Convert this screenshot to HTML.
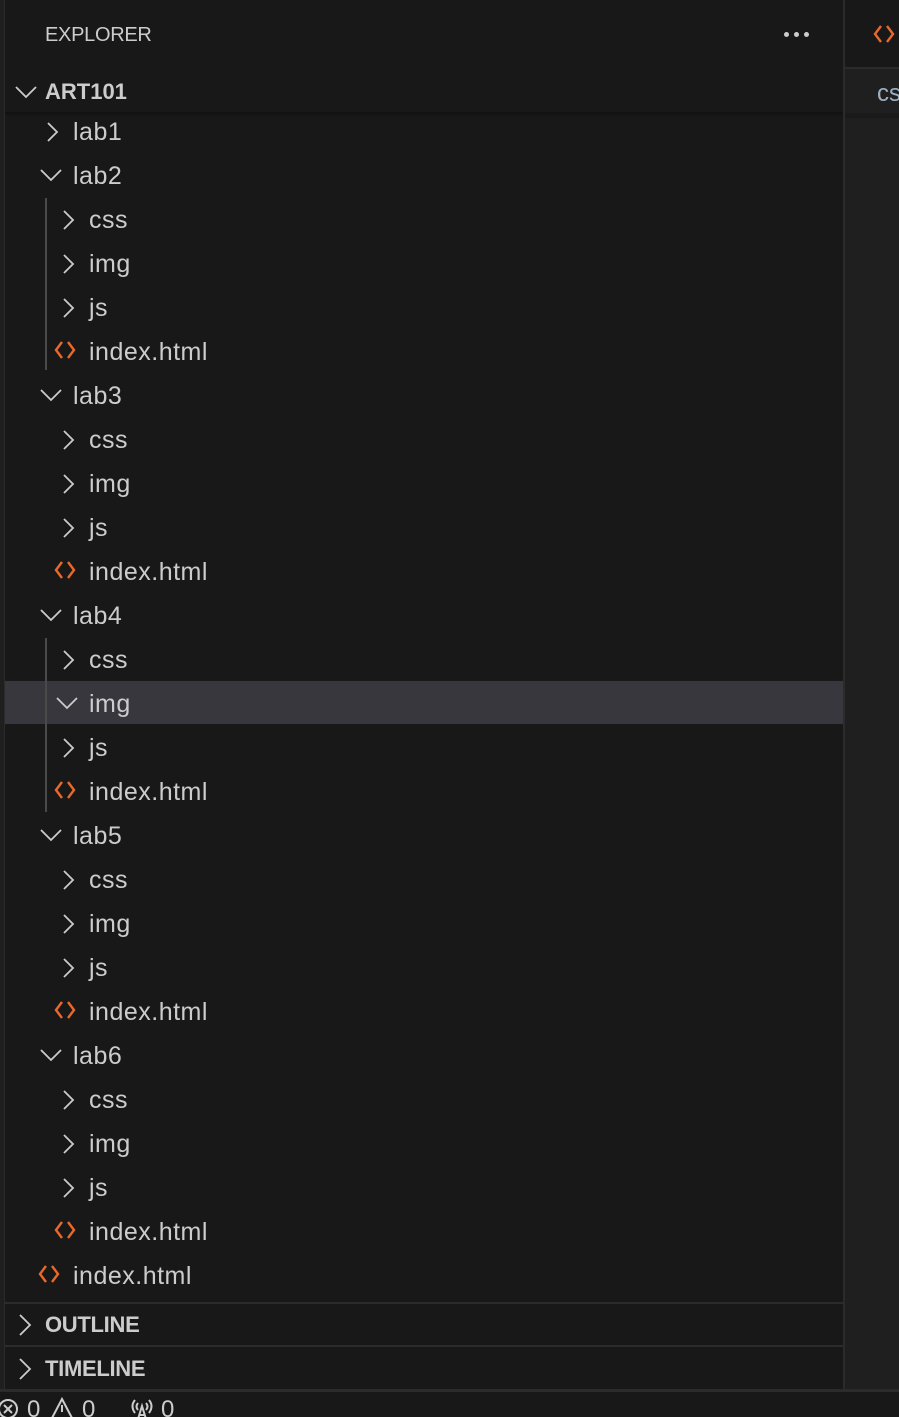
<!DOCTYPE html>
<html><head><meta charset="utf-8"><style>
*{margin:0;padding:0;box-sizing:border-box}
html,body{width:899px;height:1417px;overflow:hidden}
body{background:#181818;position:relative;font-family:"Liberation Sans",sans-serif;color:#cccccc}
.a{position:absolute}
.g{position:absolute;left:45px;width:2px;background:#4a4a4a}
</style></head><body>
<div class="a" style="left:0;top:0;width:5px;height:1390px;background:#1f1f1f"></div>
<div class="a" style="left:4px;top:0;width:1px;height:1390px;background:#2b2b2b"></div>
<div class="a" style="left:843px;top:0;width:2px;height:1390px;background:#2b2b2b"></div>
<div class="a" style="left:845px;top:0;width:54px;height:68px;background:#181818"></div>
<div class="a" style="left:845px;top:67px;width:54px;height:2px;background:#2b2b2b"></div>
<div class="a" style="left:845px;top:69px;width:54px;height:1321px;background:#1f1f1f"></div>
<div class="a" style="left:845px;top:113px;width:54px;height:5px;background:#1a1a1a"></div>
<svg class="a" style="left:873px;top:24px" width="22" height="20" viewBox="0 0 22 20"><path d="M8 2 L2 10 L8 18 M14 2 L20 10 L14 18" stroke="#e8692b" stroke-width="2.4" fill="none"/></svg>
<div class="a" style="left:877px;top:80px;font-size:24px;color:#9cb0c4">cs</div>
<div class="a" style="left:45px;top:24px;font-size:20px;color:#cccccc;letter-spacing:-0.3px">EXPLORER</div>
<div class="a" style="left:784px;top:32px;width:5px;height:5px;border-radius:50%;background:#ccc"></div>
<div class="a" style="left:794px;top:32px;width:5px;height:5px;border-radius:50%;background:#ccc"></div>
<div class="a" style="left:804px;top:32px;width:5px;height:5px;border-radius:50%;background:#ccc"></div>
<svg class="a" style="left:15px;top:85px" width="22" height="14" viewBox="0 0 22 14"><path d="M1 2 L11 12 L21 2" stroke="#ccc" stroke-width="1.8" fill="none"/></svg>
<div class="a" style="left:45px;top:79px;font-size:22px;font-weight:bold;color:#cccccc">ART101</div>
<div class="a" style="left:5px;top:112px;width:838px;height:5px;background:linear-gradient(#111,#181818)"></div>
<div class="a" style="left:5px;top:681px;width:838px;height:43px;background:#37373d"></div>
<div class="g" style="top:198px;height:172px"></div>
<div class="g" style="top:638px;height:174px"></div>
<div id="tree"></div>
<div class="a" style="left:5px;top:1302px;width:838px;height:2px;background:#2b2b2b"></div>
<svg class="a" style="left:18px;top:1313px" width="14" height="24" viewBox="0 0 14 24"><path d="M2 2 L12 12 L2 22" stroke="#ccc" stroke-width="1.8" fill="none"/></svg>
<div class="a" style="left:45px;top:1312px;font-size:22px;font-weight:bold;letter-spacing:-0.3px">OUTLINE</div>
<div class="a" style="left:5px;top:1345px;width:838px;height:2px;background:#2b2b2b"></div>
<svg class="a" style="left:18px;top:1357px" width="14" height="24" viewBox="0 0 14 24"><path d="M2 2 L12 12 L2 22" stroke="#ccc" stroke-width="1.8" fill="none"/></svg>
<div class="a" style="left:45px;top:1356px;font-size:22px;font-weight:bold;letter-spacing:-0.3px">TIMELINE</div>
<div class="a" style="left:0;top:1389px;width:899px;height:3px;background:#2b2b2b"></div>
<div class="a" style="left:0;top:1392px;width:899px;height:25px;background:#181818"></div>
<svg class="a" style="left:-2px;top:1398px" width="22" height="22"><circle cx="10" cy="11" r="9" stroke="#ccc" stroke-width="2" fill="none"/><path d="M6 7 L14 15 M14 7 L6 15" stroke="#ccc" stroke-width="2"/></svg>
<div class="a" style="left:27px;top:1398px;font-size:24px;line-height:24px">0</div>
<svg class="a" style="left:50px;top:1397px" width="24" height="22"><path d="M12 2 L22 21 L2 21 Z" stroke="#ccc" stroke-width="2" fill="none"/><path d="M12 8 V15" stroke="#ccc" stroke-width="2"/></svg>
<div class="a" style="left:82px;top:1398px;font-size:24px;line-height:24px">0</div>
<svg class="a" style="left:129px;top:1397px" width="26" height="22"><path d="M6 3 Q1 9 6 16 M20 3 Q25 9 20 16 M9 6 Q6 9.5 9 13 M17 6 Q20 9.5 17 13" stroke="#ccc" stroke-width="2" fill="none"/><path d="M9 22 L13 9 L17 22 M10.5 18 H15.5" stroke="#ccc" stroke-width="2" fill="none"/></svg>
<div class="a" style="left:161px;top:1398px;font-size:24px;line-height:24px">0</div>
<script>
var items=[[1,'f','lab1'],[1,'o','lab2'],[2,'f','css'],[2,'f','img'],[2,'f','js'],[2,'h','index.html'],
[1,'o','lab3'],[2,'f','css'],[2,'f','img'],[2,'f','js'],[2,'h','index.html'],
[1,'o','lab4'],[2,'f','css'],[2,'o','img'],[2,'f','js'],[2,'h','index.html'],
[1,'o','lab5'],[2,'f','css'],[2,'f','img'],[2,'f','js'],[2,'h','index.html'],
[1,'o','lab6'],[2,'f','css'],[2,'f','img'],[2,'f','js'],[2,'h','index.html'],[1,'h','index.html']];
var h='';
items.forEach(function(it,i){
 var cy=132+44*i;
 var tx=it[0]==1?73:89;
 var icx=tx-28;
 var svg;
 if(it[1]=='f') svg='<svg class="a" style="left:'+(icx+1)+'px;top:'+(cy-11)+'px" width="14" height="22" viewBox="0 0 14 22"><path d="M2 2 L11 11 L2 20" stroke="#ccc" stroke-width="1.8" fill="none"/></svg>';
 else if(it[1]=='o') svg='<svg class="a" style="left:'+(icx-5)+'px;top:'+(cy-8)+'px" width="22" height="14" viewBox="0 0 22 14"><path d="M1 2 L11 12 L21 2" stroke="#ccc" stroke-width="1.8" fill="none"/></svg>';
 else svg='<svg class="a" style="left:'+(icx-7)+'px;top:'+(cy-12)+'px" width="22" height="20" viewBox="0 0 22 20"><path d="M8 2 L2 10 L8 18 M14 2 L20 10 L14 18" stroke="#e8692b" stroke-width="2.4" fill="none"/></svg>';
 h+=svg+'<div class="a" style="left:'+tx+'px;top:'+(cy-14)+'px;font-size:25px;line-height:28px;letter-spacing:0.5px">'+it[2]+'</div>';
});
document.getElementById('tree').innerHTML=h;
</script>
</body></html>
